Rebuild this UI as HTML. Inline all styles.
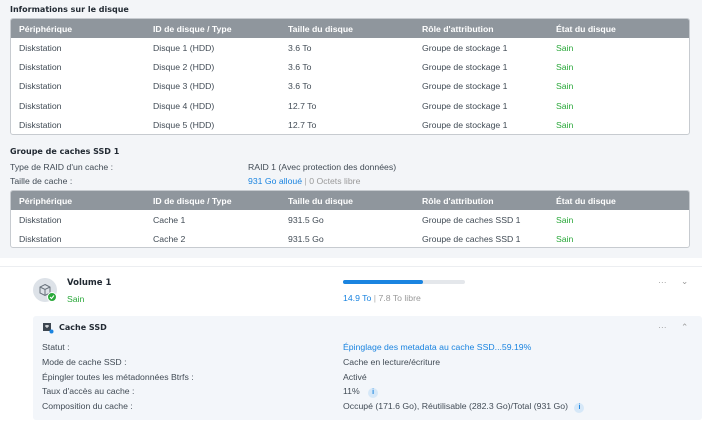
<!DOCTYPE html>
<html><head><meta charset="utf-8"><style>
*{margin:0;padding:0;box-sizing:border-box}
body{width:702px;height:427px;background:#fff;font-family:"Liberation Sans","DejaVu Sans",sans-serif;font-size:8.7px;color:#414b55;position:relative;overflow:hidden}
.a{position:absolute;white-space:nowrap}
.top{position:absolute;left:0;top:0;width:702px;height:258px;background:#f3f5f8}
.tbl{position:absolute;left:10px;width:680px;background:#fff;border:1px solid #c7cbd0;border-radius:3px;overflow:hidden}
.hd{height:19px;background:#8f969d;color:#fff;font-weight:bold;position:relative}
.row{height:19.3px;position:relative}
.c{position:absolute;top:50%;transform:translateY(-50%)}
.g{color:#2aa83a}
.b{color:#1a84e0}
.t{font-weight:bold;color:#222a33;font-family:"DejaVu Sans",sans-serif;font-size:8px}
</style></head><body>
<div class="top"></div>
<div class="a t" style="left:10px;top:5px">Informations sur le disque</div>
<div class="tbl" style="top:18px;height:117px">
<div class="hd"><span class="c" style="left:8px">Périphérique</span><span class="c" style="left:142px">ID de disque / Type</span><span class="c" style="left:277px">Taille du disque</span><span class="c" style="left:411px">Rôle d'attribution</span><span class="c" style="left:545px">État du disque</span></div>
<div class="row"><span class="c" style="left:8px">Diskstation</span><span class="c" style="left:142px">Disque 1 (HDD)</span><span class="c" style="left:277px">3.6 To</span><span class="c" style="left:411px">Groupe de stockage 1</span><span class="c g" style="left:545px">Sain</span></div>
<div class="row"><span class="c" style="left:8px">Diskstation</span><span class="c" style="left:142px">Disque 2 (HDD)</span><span class="c" style="left:277px">3.6 To</span><span class="c" style="left:411px">Groupe de stockage 1</span><span class="c g" style="left:545px">Sain</span></div>
<div class="row"><span class="c" style="left:8px">Diskstation</span><span class="c" style="left:142px">Disque 3 (HDD)</span><span class="c" style="left:277px">3.6 To</span><span class="c" style="left:411px">Groupe de stockage 1</span><span class="c g" style="left:545px">Sain</span></div>
<div class="row"><span class="c" style="left:8px">Diskstation</span><span class="c" style="left:142px">Disque 4 (HDD)</span><span class="c" style="left:277px">12.7 To</span><span class="c" style="left:411px">Groupe de stockage 1</span><span class="c g" style="left:545px">Sain</span></div>
<div class="row"><span class="c" style="left:8px">Diskstation</span><span class="c" style="left:142px">Disque 5 (HDD)</span><span class="c" style="left:277px">12.7 To</span><span class="c" style="left:411px">Groupe de stockage 1</span><span class="c g" style="left:545px">Sain</span></div>
</div>
<div class="a t" style="left:10px;top:147px">Groupe de caches SSD 1</div>
<div class="a" style="left:10px;top:162px">Type de RAID d'un cache :</div>
<div class="a" style="left:248px;top:162px">RAID 1 (Avec protection des données)</div>
<div class="a" style="left:10px;top:176px">Taille de cache :</div>
<div class="a" style="left:248px;top:176px"><span class="b">931 Go alloué</span> <span style="color:#aaa">|</span> <span style="color:#999">0 Octets libre</span></div>
<div class="tbl" style="top:190px;height:58px">
<div class="hd"><span class="c" style="left:8px">Périphérique</span><span class="c" style="left:142px">ID de disque / Type</span><span class="c" style="left:277px">Taille du disque</span><span class="c" style="left:411px">Rôle d'attribution</span><span class="c" style="left:545px">État du disque</span></div>
<div class="row"><span class="c" style="left:8px">Diskstation</span><span class="c" style="left:142px">Cache 1</span><span class="c" style="left:277px">931.5 Go</span><span class="c" style="left:411px">Groupe de caches SSD 1</span><span class="c g" style="left:545px">Sain</span></div>
<div class="row"><span class="c" style="left:8px">Diskstation</span><span class="c" style="left:142px">Cache 2</span><span class="c" style="left:277px">931.5 Go</span><span class="c" style="left:411px">Groupe de caches SSD 1</span><span class="c g" style="left:545px">Sain</span></div>
</div>
<div class="a" style="left:0;top:266px;width:702px;height:1px;background:#eceef1"></div>
<div class="a" style="left:33px;top:278px;width:24px;height:24px;border-radius:50%;background:#dde2e8"></div>
<svg class="a" style="left:38px;top:283px" width="14" height="14" viewBox="0 0 14 14"><path d="M7 1.5L12 4v6L7 12.5 2 10V4z M2 4l5 2.5L12 4 M7 6.5v6" fill="none" stroke="#66707a" stroke-width="1"/></svg>
<div class="a" style="left:47px;top:292px;width:10px;height:10px;border-radius:50%;background:#2aa83a;border:1px solid #fff"></div>
<svg class="a" style="left:49px;top:294px" width="6" height="6" viewBox="0 0 6 6"><path d="M1 3l1.5 1.5L5 1.5" fill="none" stroke="#fff" stroke-width="1.1"/></svg>
<div class="a t" style="left:67px;top:278px;font-size:8.5px">Volume 1</div>
<div class="a g" style="left:67px;top:294px">Sain</div>
<div class="a" style="left:343px;top:280px;width:122px;height:4px;border-radius:2px;background:#e4e7eb"></div>
<div class="a" style="left:343px;top:280px;width:80px;height:4px;border-radius:2px;background:#1a84e0"></div>
<div class="a" style="left:343px;top:293px"><span class="b">14.9 To</span> <span style="color:#aaa">|</span> <span style="color:#999">7.8 To libre</span></div>
<div class="a" style="left:658px;top:277px;color:#999">···</div>
<div class="a" style="left:681px;top:276px;color:#999">&#8964;</div>
<div class="a" style="left:33px;top:316px;width:669px;height:104px;background:#f3f6fa;border-radius:3px"></div>
<svg class="a" style="left:42px;top:322px" width="12" height="12" viewBox="0 0 12 12"><rect x="1" y="1" width="8" height="8" fill="#3d4650"/><path d="M3 4h4M5 3v3" stroke="#fff" stroke-width="1"/><circle cx="9.5" cy="9.5" r="2" fill="#1a84e0"/></svg>
<div class="a t" style="left:59px;top:323px">Cache SSD</div>
<div class="a" style="left:658px;top:322px;color:#999">···</div>
<div class="a" style="left:681px;top:322px;color:#999">&#8963;</div>
<div class="a" style="left:42px;top:342px">Statut :</div>
<div class="a" style="left:42px;top:357px">Mode de cache SSD :</div>
<div class="a" style="left:42px;top:372px">Épingler toutes les métadonnées Btrfs :</div>
<div class="a" style="left:42px;top:386px">Taux d'accès au cache :</div>
<div class="a" style="left:42px;top:401px">Composition du cache :</div>
<div class="a b" style="left:343px;top:342px">Épinglage des metadata au cache SSD...59.19%</div>
<div class="a" style="left:343px;top:357px">Cache en lecture/écriture</div>
<div class="a" style="left:343px;top:372px">Activé</div>
<div class="a" style="left:343px;top:386px">11% <span style="display:inline-block;width:10px;height:10px;border-radius:50%;background:#d6e8f8;color:#1a84e0;font-size:7px;text-align:center;line-height:10px;font-weight:bold;margin-left:6px">i</span></div>
<div class="a" style="left:343px;top:401px">Occupé (171.6 Go), Réutilisable (282.3 Go)/Total (931 Go) <span style="display:inline-block;width:10px;height:10px;border-radius:50%;background:#d6e8f8;color:#1a84e0;font-size:7px;text-align:center;line-height:10px;font-weight:bold;margin-left:4px">i</span></div>
</body></html>
